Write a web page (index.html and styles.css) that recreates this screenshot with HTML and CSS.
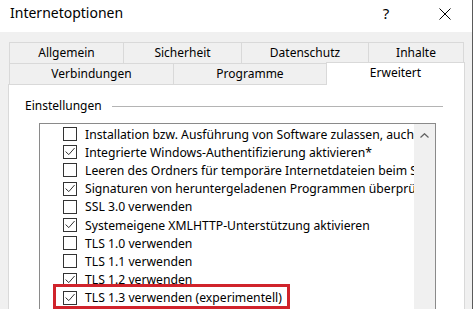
FILE: index.html
```html
<!DOCTYPE html>
<html lang="de">
<head>
  <meta charset="UTF-8" />
  <title>Internetoptionen</title>
  <link rel="stylesheet" href="styles.css">
</head>
<body>
  <div class="window">
    <div class="titlebar">
      <span class="title">Internetoptionen</span>
      <span class="help">?</span>
      <svg class="close" width="12" height="12" viewBox="0 0 12 12">
        <path d="M0.5 0.5 L11.5 11.5 M11.5 0.5 L0.5 11.5" stroke="#000" stroke-width="1" fill="none" />
      </svg>
    </div>

    <div class="content">
      <div class="tab-row">
        <div class="tab w-allgemein">Allgemein</div>
        <div class="tab w-sicherheit">Sicherheit</div>
        <div class="tab w-datenschutz">Datenschutz</div>
        <div class="tab w-inhalte">Inhalte</div>
      </div>
      <div class="tab-row">
        <div class="tab w-verbindungen">Verbindungen</div>
        <div class="tab w-programme">Programme</div>
        <div class="tab tab-active">Erweitert</div>
      </div>

      <div class="panel">
        <div class="group-head">
          <span>Einstellungen</span>
          <div class="rule"></div>
        </div>

        <div class="list">
          <div class="items">
            <div class="item"><span class="box"></span>Installation bzw. Ausführung von Software zulassen, auch wenn die Signatur ungültig ist</div>
            <div class="item"><span class="box checked"></span>Integrierte Windows-Authentifizierung aktivieren*</div>
            <div class="item"><span class="box"></span>Leeren des Ordners für temporäre Internetdateien beim Schließen des Browsers</div>
            <div class="item"><span class="box checked"></span>Signaturen von heruntergeladenen Programmen überprüfen</div>
            <div class="item"><span class="box"></span>SSL 3.0 verwenden</div>
            <div class="item"><span class="box checked"></span>Systemeigene XMLHTTP-Unterstützung aktivieren</div>
            <div class="item"><span class="box"></span>TLS 1.0 verwenden</div>
            <div class="item"><span class="box"></span>TLS 1.1 verwenden</div>
            <div class="item"><span class="box checked"></span>TLS 1.2 verwenden</div>
            <div class="item marked"><span class="box checked"></span>TLS 1.3 verwenden (experimentell)</div>
            <div class="item"><span class="box checked"></span>Bei Zertifikatadressen-Konflikt warnen*</div>
          </div>
          <div class="scrollbar">
            <svg class="arrow-up" width="9" height="5" viewBox="0 0 9 5">
              <path d="M0.5 4.5 L4.5 0.7 L8.5 4.5" stroke="#606060" stroke-width="1.2" fill="none" />
            </svg>
          </div>
        </div>
      </div>
    </div>
  </div>
</body>
</html>
```

FILE: styles.css
```css
body {
  margin: 0;
  background: #ffffff;
  font-family: 'Noto Sans', sans-serif;
  color: #000;
  overflow: hidden;
}

.window {
  width: 472px;
  height: 309px;
  border-right: 1px solid #5a5a5a;
  overflow: hidden;
  background: #f0f0f0;
}

/* title bar */

.titlebar {
  height: 32px;
  background: #ffffff;
  display: flex;
  align-items: flex-start;
}

.title {
  flex: 1;
  padding: 3px 0 0 10px;
  font-size: 14px;
  line-height: 20px;
}

.help {
  width: 8px;
  margin-top: 3px;
  margin-right: 49px;
  text-align: center;
  font-size: 15px;
  line-height: 20px;
}

.close {
  display: block;
  margin-top: 8px;
  margin-right: 21px;
}

/* tabs */

.content {
  padding: 10px 0 0 8px;
}

.tab-row {
  display: flex;
  margin-left: 1px;
}

.tab {
  flex: none;
  box-sizing: border-box;
  height: 21px;
  border: 1px solid #d9d9d9;
  border-bottom: none;
  text-align: center;
  font-size: 12px;
  line-height: 20px;
  white-space: nowrap;
}

.tab + .tab {
  margin-left: -1px;
}

.w-allgemein { width: 115px; }
.w-sicherheit { width: 119px; }
.w-datenschutz { width: 128px; }
.w-inhalte { width: 96px; }
.w-verbindungen { width: 165px; }
.w-programme { width: 154px; }

.tab-active {
  width: 139px;
  height: 23px;
  margin-top: -1px;
  margin-bottom: -1px;
  background: #ffffff;
  position: relative;
  z-index: 1;
}

/* panel */

.panel {
  width: 457px;
  height: 240px;
  box-sizing: border-box;
  border: 1px solid #d9d9d9;
  background: #ffffff;
  padding: 12px 21px 0 16px;
}

.group-head {
  display: flex;
  align-items: center;
  height: 18px;
  font-size: 12px;
  line-height: 18px;
}

.rule {
  flex: 1;
  height: 1px;
  margin-left: 10px;
  background: #b4b4b4;
}

.list {
  display: flex;
  width: 397px;
  height: 200px;
  box-sizing: border-box;
  margin: 8px 0 0 14px;
  border: 1px solid #8a8a8a;
}

.items {
  flex: 1;
  overflow: hidden;
  padding-top: 1px;
}

.item {
  display: flex;
  align-items: center;
  height: 18.2px;
  padding-left: 23px;
  font-size: 12.2px;
  white-space: nowrap;
}

.box {
  flex: none;
  width: 14px;
  height: 14px;
  box-sizing: border-box;
  margin-right: 8px;
  border: 1px solid #333333;
  background: #ffffff;
}

.box.checked {
  background: #ffffff url("data:image/svg+xml,%3Csvg xmlns='http://www.w3.org/2000/svg' width='12' height='12' viewBox='0 0 12 12'%3E%3Cpath d='M1.6 5.6 L4.8 8.6 L10.6 2' stroke='%23333' stroke-width='1' fill='none'/%3E%3C/svg%3E") no-repeat;
}

.marked {
  position: relative;
}

.marked::after {
  content: "";
  position: absolute;
  left: 13px;
  top: -5px;
  width: 237px;
  height: 25px;
  box-sizing: border-box;
  border: 3px solid #d0232b;
}

.scrollbar {
  flex: none;
  width: 21px;
  background: #f0f0f0;
}

.arrow-up {
  display: block;
  margin: 9px auto 0;
}
```
